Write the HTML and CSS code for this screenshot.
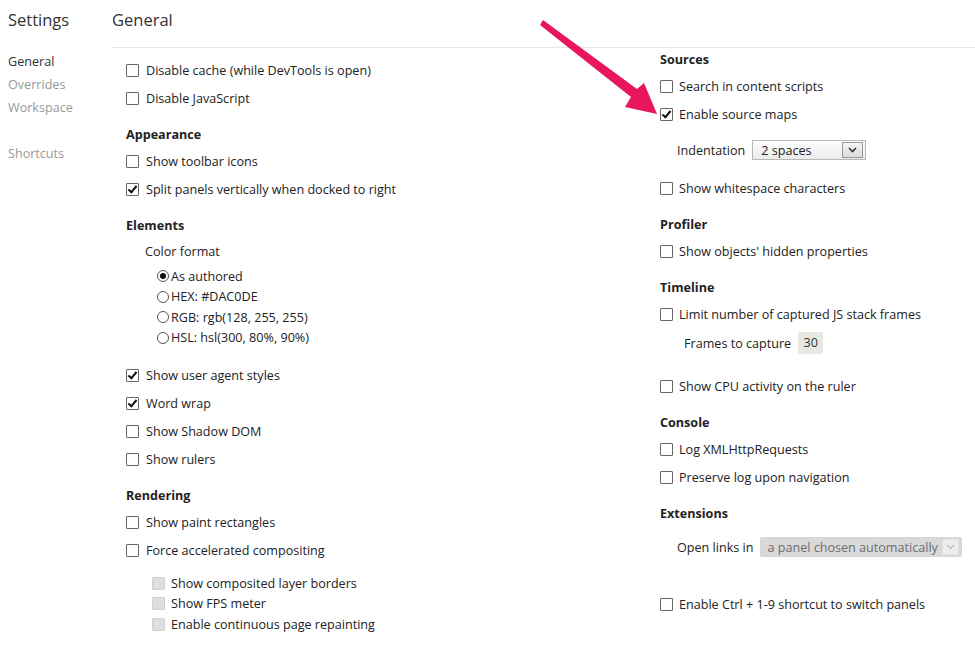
FILE: index.html
```html
<!DOCTYPE html>
<html>
<head>
    <title>Settings</title>
    <link rel="stylesheet" href="styles.css">
</head>
<body>
    <div class="page">
        <div class="sidebar">
            <h1 class="title">Settings</h1>
            <ul class="nav">
                <li class="active">General</li>
                <li>Overrides</li>
                <li>Workspace</li>
                <li class="spacer"></li>
                <li>Shortcuts</li>
            </ul>
        </div>
        <div class="main">
            <h2 class="main-head">General</h2>
            <div class="columns">
                <div class="col col-left">
                    <div class="row"><span class="box"></span>Disable cache (while DevTools is open)</div>
                    <div class="row"><span class="box"></span>Disable JavaScript</div>

                    <div class="section">Appearance</div>
                    <div class="row"><span class="box"></span>Show toolbar icons</div>
                    <div class="row"><span class="box checked"></span>Split panels vertically when docked to right</div>

                    <div class="section">Elements</div>
                    <div class="label">Color format</div>
                    <ul class="radios">
                        <li><span class="radio checked"></span>As authored</li>
                        <li><span class="radio"></span>HEX: #DAC0DE</li>
                        <li><span class="radio"></span>RGB: rgb(128, 255, 255)</li>
                        <li><span class="radio"></span>HSL: hsl(300, 80%, 90%)</li>
                    </ul>
                    <div class="row after-radios"><span class="box checked"></span>Show user agent styles</div>
                    <div class="row"><span class="box checked"></span>Word wrap</div>
                    <div class="row"><span class="box"></span>Show Shadow DOM</div>
                    <div class="row"><span class="box"></span>Show rulers</div>

                    <div class="section">Rendering</div>
                    <div class="row"><span class="box"></span>Show paint rectangles</div>
                    <div class="row"><span class="box"></span>Force accelerated compositing</div>
                    <ul class="subs">
                        <li><span class="box disabled"></span>Show composited layer borders</li>
                        <li><span class="box disabled"></span>Show FPS meter</li>
                        <li><span class="box disabled"></span>Enable continuous page repainting</li>
                    </ul>
                </div>

                <div class="col col-right">
                    <div class="section first">Sources</div>
                    <div class="row"><span class="box"></span>Search in content scripts</div>
                    <div class="row"><span class="box checked"></span>Enable source maps</div>
                    <div class="field indent">
                        <span class="field-label">Indentation</span>
                        <span class="select">
                            <span class="select-text">2 spaces</span>
                            <span class="select-btn"><svg width="9" height="6" viewBox="0 0 9 6"><path d="M1 1l3.5 3.5L8 1" fill="none" stroke="#333" stroke-width="1.6"/></svg></span>
                        </span>
                    </div>
                    <div class="row"><span class="box"></span>Show whitespace characters</div>

                    <div class="section">Profiler</div>
                    <div class="row"><span class="box"></span>Show objects' hidden properties</div>

                    <div class="section">Timeline</div>
                    <div class="row"><span class="box"></span>Limit number of captured JS stack frames</div>
                    <div class="field frames">
                        <span class="field-label">Frames to capture</span>
                        <span class="num">30</span>
                    </div>
                    <div class="row"><span class="box"></span>Show CPU activity on the ruler</div>

                    <div class="section">Console</div>
                    <div class="row"><span class="box"></span>Log XMLHttpRequests</div>
                    <div class="row"><span class="box"></span>Preserve log upon navigation</div>

                    <div class="section">Extensions</div>
                    <div class="field links">
                        <span class="field-label">Open links in</span>
                        <span class="select off">
                            <span class="select-text">a panel chosen automatically</span>
                            <span class="select-btn"><svg width="9" height="6" viewBox="0 0 9 6"><path d="M1 1l3.5 3.5L8 1" fill="none" stroke="#bbb" stroke-width="1.2"/></svg></span>
                        </span>
                    </div>
                    <div class="row last"><span class="box"></span>Enable Ctrl + 1-9 shortcut to switch panels</div>
                </div>
            </div>
        </div>
    </div>

    <svg class="arrow" width="975" height="652" viewBox="0 0 975 652">
        <polygon points="540,25 543,20 637,89 644,83 657,114 625,107 631,97" fill="#e8175d"/>
    </svg>
</body>
</html>
```

FILE: styles.css
```css
body {
    margin: 0;
    font-family: "Open Sans", "Noto Sans", sans-serif;
    font-size: 12.6px;
    color: #222;
    background: #fff;
}

ul {
    list-style: none;
    margin: 0;
    padding: 0;
}

.page {
    display: flex;
}

.sidebar {
    width: 104px;
    padding-left: 8px;
}

.title,
.main-head {
    margin: 0;
    height: 47px;
    line-height: 40px;
    font-size: 16.5px;
    font-weight: normal;
    color: #333;
}

.nav {
    padding-top: 3px;
}

.nav li {
    height: 23px;
    line-height: 23px;
    color: #999;
}

.nav li.active {
    color: #333;
}

.main {
    flex: 1;
}

.main-head {
    border-bottom: 1px solid #e6e6e6;
}

.columns {
    display: flex;
}

.col-left {
    width: 534px;
    padding-left: 14px;
    padding-top: 8px;
}

.col-right {
    flex: 1;
}

.row {
    display: flex;
    align-items: center;
    height: 28px;
    white-space: nowrap;
}

.box {
    width: 11px;
    height: 11px;
    border: 1px solid #666;
    border-radius: 1px;
    margin-right: 7px;
    position: relative;
    background: #fff;
    flex-shrink: 0;
}

.col-right .box {
    margin-right: 6px;
}

.box.checked::after {
    content: "";
    position: absolute;
    left: 3px;
    top: 0px;
    width: 3px;
    height: 7px;
    border: solid #111;
    border-width: 0 2px 2px 0;
    transform: rotate(40deg);
}

.box.disabled {
    background: #dedede;
    border-color: #d0d0d0;
}

.section {
    margin-top: 9px;
    height: 26px;
    line-height: 28px;
    font-weight: bold;
}

.section.first {
    margin-top: 0;
    height: 24px;
    line-height: 24px;
}

.label {
    height: 28px;
    line-height: 28px;
    padding-left: 19px;
}

.radios {
    padding-left: 31px;
}

.radios li {
    display: flex;
    align-items: center;
    height: 20.5px;
}

.radio {
    width: 10px;
    height: 10px;
    border: 1px solid #555;
    border-radius: 50%;
    margin-right: 2px;
    position: relative;
}

.radio.checked::after {
    content: "";
    position: absolute;
    left: 2px;
    top: 2px;
    width: 6px;
    height: 6px;
    border-radius: 50%;
    background: #111;
}

.after-radios {
    margin-top: 13px;
}

.subs {
    margin-top: 9px;
    padding-left: 26px;
}

.subs li {
    display: flex;
    align-items: center;
    height: 20.5px;
}

.subs .box {
    margin-right: 6px;
}

.field {
    display: flex;
    align-items: center;
    height: 30px;
    padding-left: 17px;
    white-space: nowrap;
}

.field-label {
    margin-right: 7px;
}

.indent {
    margin-top: 7px;
    margin-bottom: 9px;
}

.frames {
    padding-left: 24px;
    margin-bottom: 14px;
}

.links {
    margin-top: 6px;
    margin-bottom: 28px;
}

.select {
    display: flex;
    align-items: center;
    height: 18px;
    border: 1px solid #b8b8b8;
    background: linear-gradient(#fdfdfd, #ececec);
    width: 112px;
}

.select-text {
    flex: 1;
    padding-left: 8px;
    color: #222;
}

.select-btn {
    width: 19px;
    height: 14px;
    margin-right: 2px;
    border: 1px solid #999;
    background: linear-gradient(#f6f6f6, #dcdcdc);
    display: flex;
    align-items: center;
    justify-content: center;
}

.select.off {
    width: 200px;
    border-color: #d6d6d6;
    background: #d9d9d9;
    border-radius: 2px;
}

.select.off .select-text {
    padding-left: 6px;
    color: #6e6e6e;
}

.select.off .select-btn {
    margin-left: 4px;
    border-color: #e0e0e0;
    background: #ededed;
}

.num {
    display: inline-block;
    width: 25px;
    height: 22px;
    line-height: 22px;
    text-align: center;
    background: #e8e8e2;
    border-radius: 2px;
    color: #333;
}

.arrow {
    position: absolute;
    left: 0;
    top: 0;
    pointer-events: none;
}
```
